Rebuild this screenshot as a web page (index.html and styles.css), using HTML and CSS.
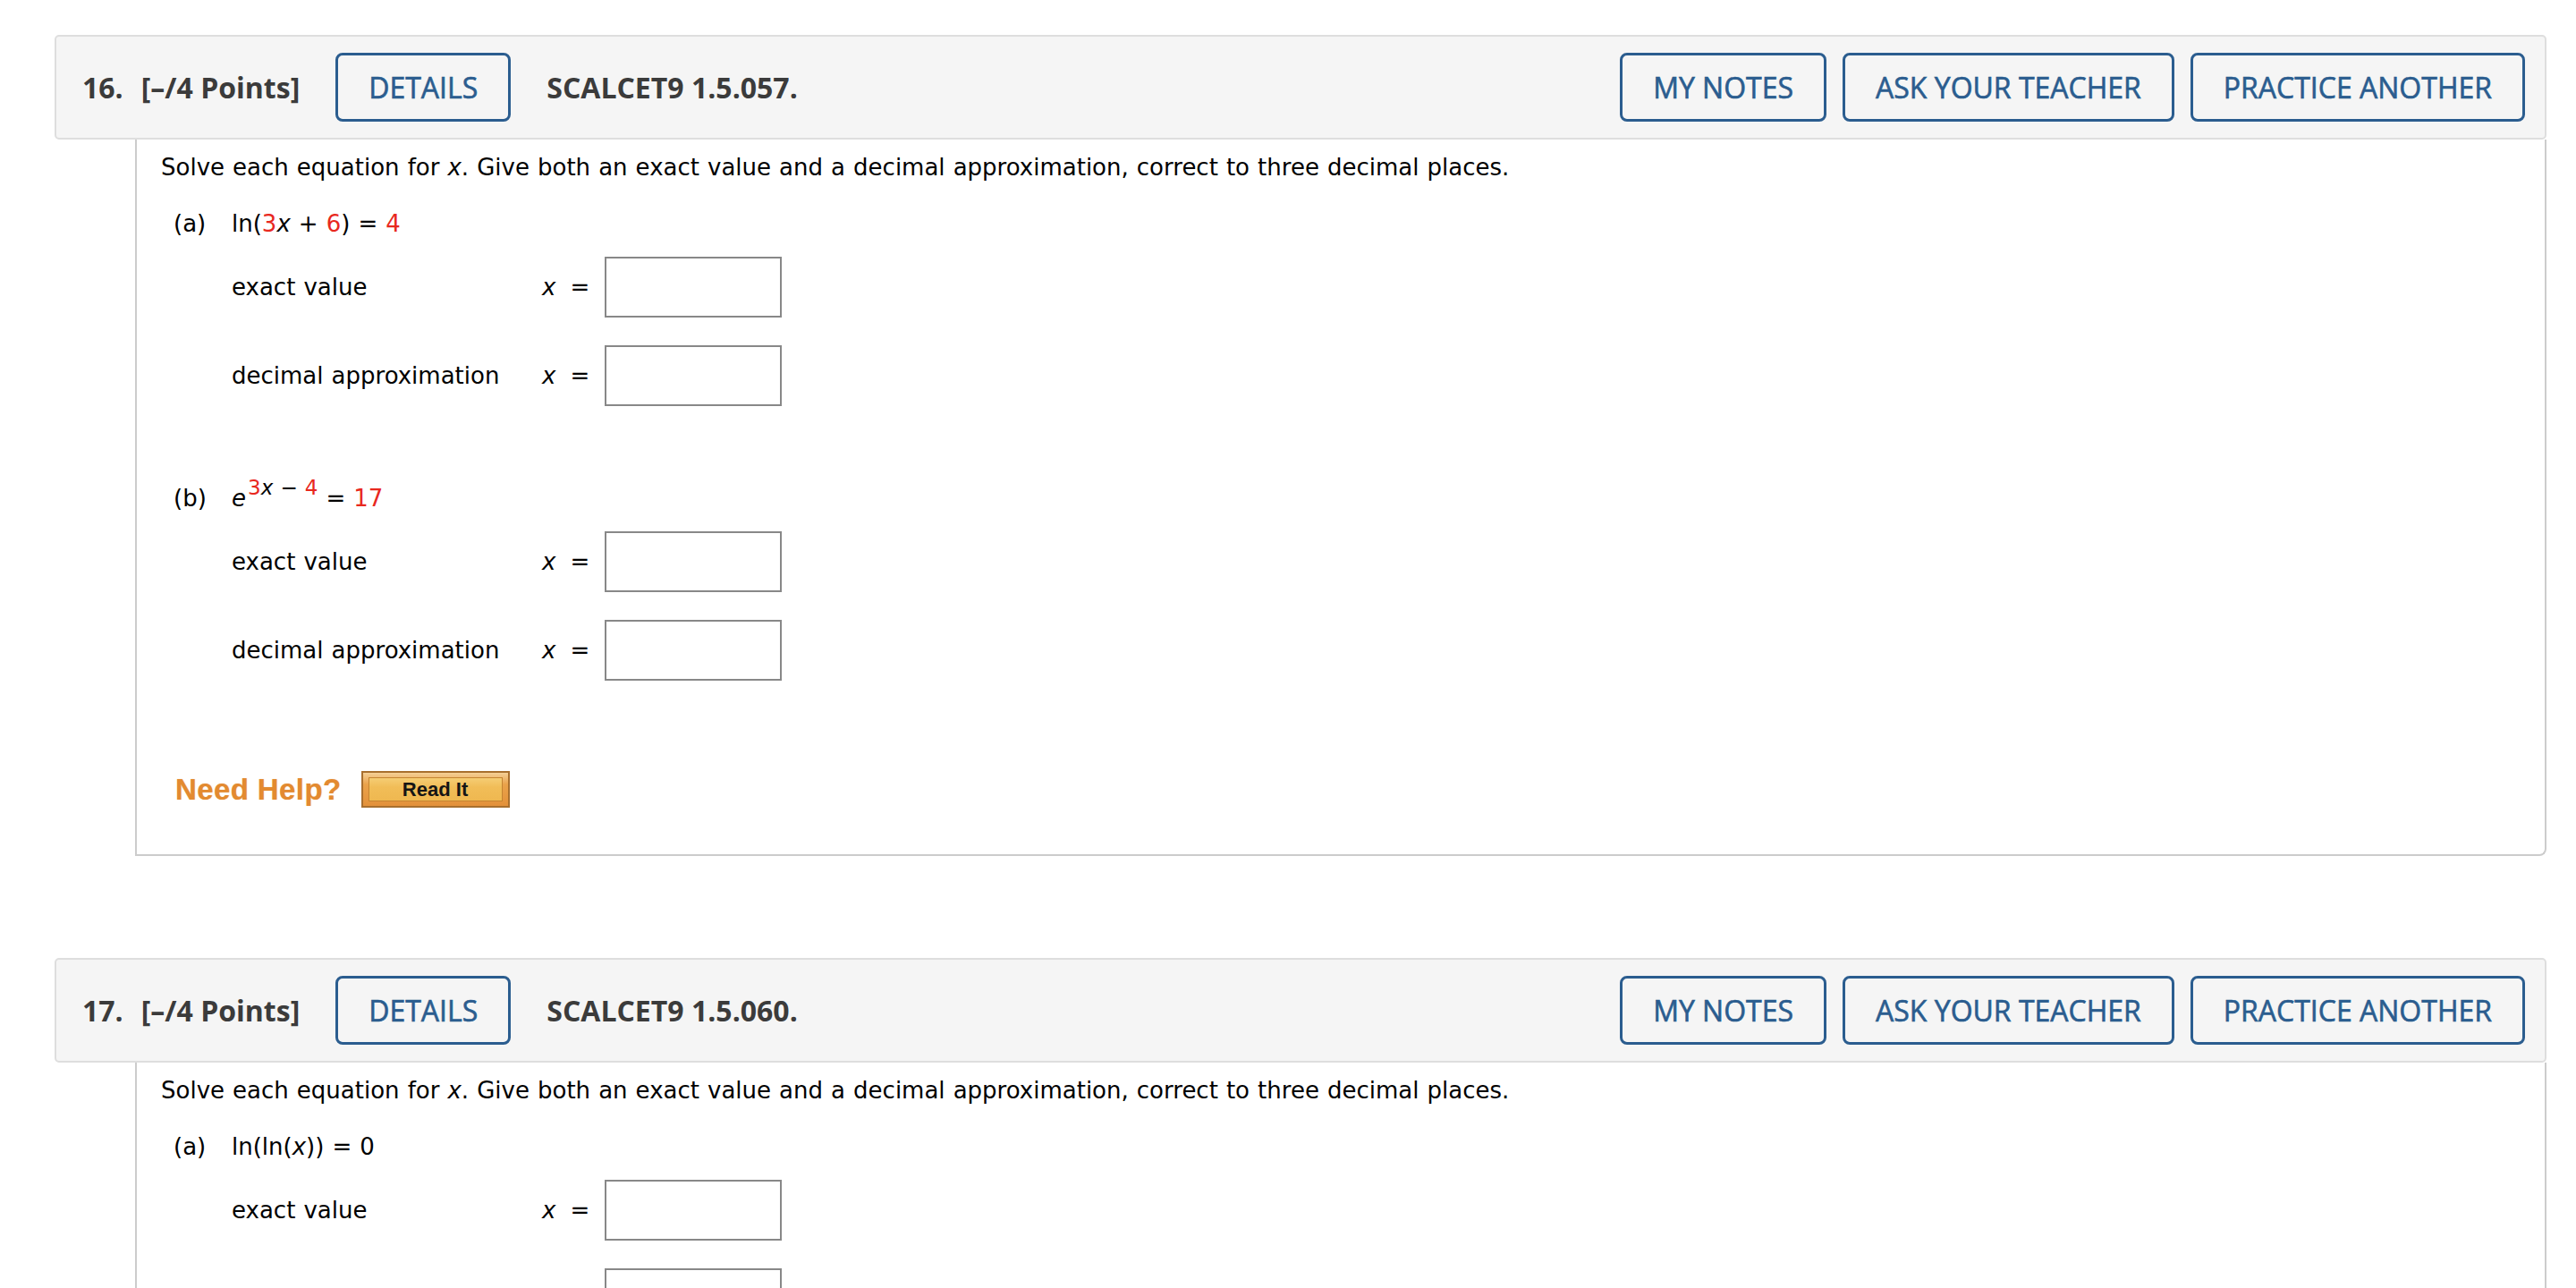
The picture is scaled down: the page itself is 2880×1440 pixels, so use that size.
FILE: index.html
```html
<!DOCTYPE html>
<html lang="en">
<head>
<meta charset="utf-8">
<title>SCALCET9 1.5</title>
<link rel="stylesheet" href="styles.css">
</head>
<body>
<div class="page">
  <section class="question">
    <div class="qhead">
      <span class="qnum">16.</span>
      <span class="qpts">[&ndash;/4 Points]</span>
      <button class="hbtn details">DETAILS</button>
      <span class="qsrc">SCALCET9 1.5.057.</span>
      <div class="hright">
        <button class="hbtn">MY NOTES</button>
        <button class="hbtn">ASK YOUR TEACHER</button>
        <button class="hbtn">PRACTICE ANOTHER</button>
      </div>
    </div>
    <div class="qbody">
      <p class="prompt">Solve each equation for <i>x</i>. Give both an exact value and a decimal approximation, correct to three decimal places.</p>
      <div class="part">
        <div class="part-eq"><span class="plabel">(a)</span><span class="eq">ln(<span class="red">3</span><i>x</i> + <span class="red">6</span>) = <span class="red">4</span></span></div>
        <div class="ans-row"><span class="alabel">exact value</span><span class="xeq"><i>x</i><span class="eqs">=</span></span><span class="abox"></span></div>
        <div class="ans-row gap"><span class="alabel">decimal approximation</span><span class="xeq"><i>x</i><span class="eqs">=</span></span><span class="abox"></span></div>
      </div>
      <div class="part part-b">
        <div class="part-eq"><span class="plabel">(b)</span><span class="eq"><i>e</i><span class="sup"><span class="red">3</span><i>x</i> &minus; <span class="red">4</span></span> = <span class="red">17</span></span></div>
        <div class="ans-row"><span class="alabel">exact value</span><span class="xeq"><i>x</i><span class="eqs">=</span></span><span class="abox"></span></div>
        <div class="ans-row gap"><span class="alabel">decimal approximation</span><span class="xeq"><i>x</i><span class="eqs">=</span></span><span class="abox"></span></div>
      </div>
      <div class="help">
        <span class="need">Need Help?</span>
        <span class="readit"><span class="readit-in">Read It</span></span>
      </div>
    </div>
  </section>

  <section class="question q-next">
    <div class="qhead">
      <span class="qnum">17.</span>
      <span class="qpts">[&ndash;/4 Points]</span>
      <button class="hbtn details">DETAILS</button>
      <span class="qsrc">SCALCET9 1.5.060.</span>
      <div class="hright">
        <button class="hbtn">MY NOTES</button>
        <button class="hbtn">ASK YOUR TEACHER</button>
        <button class="hbtn">PRACTICE ANOTHER</button>
      </div>
    </div>
    <div class="qbody qbody-open">
      <p class="prompt">Solve each equation for <i>x</i>. Give both an exact value and a decimal approximation, correct to three decimal places.</p>
      <div class="part">
        <div class="part-eq"><span class="plabel">(a)</span><span class="eq">ln(ln(<i>x</i>)) = 0</span></div>
        <div class="ans-row"><span class="alabel">exact value</span><span class="xeq"><i>x</i><span class="eqs">=</span></span><span class="abox"></span></div>
        <div class="ans-row gap"><span class="alabel">decimal approximation</span><span class="xeq"><i>x</i><span class="eqs">=</span></span><span class="abox"></span></div>
      </div>
    </div>
  </section>
</div>
</body>
</html>
```

FILE: styles.css
```css
html, body {
  margin: 0;
  padding: 0;
  background: #ffffff;
  overflow: hidden;
}

.page {
  padding-top: 39px;
  font-family: "DejaVu Sans", Verdana, sans-serif;
  font-size: 26px;
  color: #000;
}

.question {
  margin-left: 61px;
  width: 2786px;
}

.q-next {
  margin-top: 114px;
}

/* ---------- header bar ---------- */
.qhead {
  box-sizing: border-box;
  height: 117px;
  display: flex;
  align-items: center;
  background: #f5f5f5;
  border: 2px solid #dedede;
  border-radius: 5px;
  padding: 0 22px 0 29px;
  font-family: "Open Sans", "Liberation Sans", sans-serif;
  font-size: 32px;
  font-weight: 700;
  color: #3b3b3b;
}

.qnum {
  margin-right: 20px;
}

.qpts {
  margin-right: 40px;
}

.qsrc {
  margin-left: 40px;
}

.hright {
  margin-left: auto;
  display: flex;
  gap: 18px;
}

.hbtn {
  box-sizing: border-box;
  height: 77px;
  padding: 0 34px;
  display: inline-flex;
  align-items: center;
  justify-content: center;
  background: transparent;
  border: 3px solid #2b5d8f;
  border-radius: 8px;
  font-family: "Open Sans", "Liberation Sans", sans-serif;
  font-size: 32px;
  font-weight: 400;
  -webkit-text-stroke: 0.6px #2b5d8f;
  line-height: 1;
  color: #2b5d8f;
  cursor: pointer;
}

/* ---------- body ---------- */
.qbody {
  margin-left: 90px;
  border: 2px solid #cccccc;
  border-top: none;
  border-radius: 0 0 8px 0;
  padding: 13px 0 52px 27px;
  line-height: 36px;
  word-spacing: 0.8px;
}

.qbody-open {
  padding-bottom: 200px;
}

.prompt {
  margin: 0;
  height: 36px;
}

.red {
  color: #e8281e;
}

.part {
  padding-left: 14px;
}

.part-eq {
  margin-top: 27px;
  height: 36px;
  display: flex;
  white-space: pre;
}

.part-b .part-eq {
  margin-top: 85px;
}

.plabel {
  width: 65px;
}

.sup {
  font-size: 23px;
  line-height: 0;
  vertical-align: 13px;
  margin-left: 2px;
}

.ans-row {
  margin-top: 19px;
  padding-left: 65px;
  display: flex;
  align-items: center;
  height: 68px;
}

.ans-row.gap {
  margin-top: 31px;
}

.alabel {
  width: 347px;
}

.xeq {
  width: 70px;
  white-space: pre;
}

.eqs {
  margin-left: 16px;
}

.abox {
  box-sizing: border-box;
  width: 198px;
  height: 68px;
  border: 2px solid #888888;
  background: #fff;
}

/* ---------- help ---------- */
.help {
  margin-top: 101px;
  padding-left: 16px;
  display: flex;
  align-items: center;
  height: 41px;
}

.need {
  font-family: "Liberation Sans", Arial, sans-serif;
  font-weight: 700;
  font-size: 33px;
  letter-spacing: 0.4px;
  word-spacing: 0;
  color: #e38a30;
  text-shadow: 0 0 1px rgba(227, 138, 48, 0.6);
  margin-right: 22px;
}

.readit {
  box-sizing: border-box;
  width: 166px;
  height: 41px;
  display: flex;
  padding: 5px 6px;
  border: 2px solid #a86f2e;
  background: linear-gradient(#f4cf96 0%, #eaa24a 35%, #e3913a 100%);
}

.readit-in {
  flex: 1;
  display: flex;
  align-items: center;
  justify-content: center;
  border: 1px solid #c48431;
  background: linear-gradient(#f5cd74 0%, #f1bd58 40%, #efb850 100%);
  font-family: "Liberation Sans", Arial, sans-serif;
  font-weight: 700;
  font-size: 22px;
  word-spacing: 0;
  color: #151515;
}
```
